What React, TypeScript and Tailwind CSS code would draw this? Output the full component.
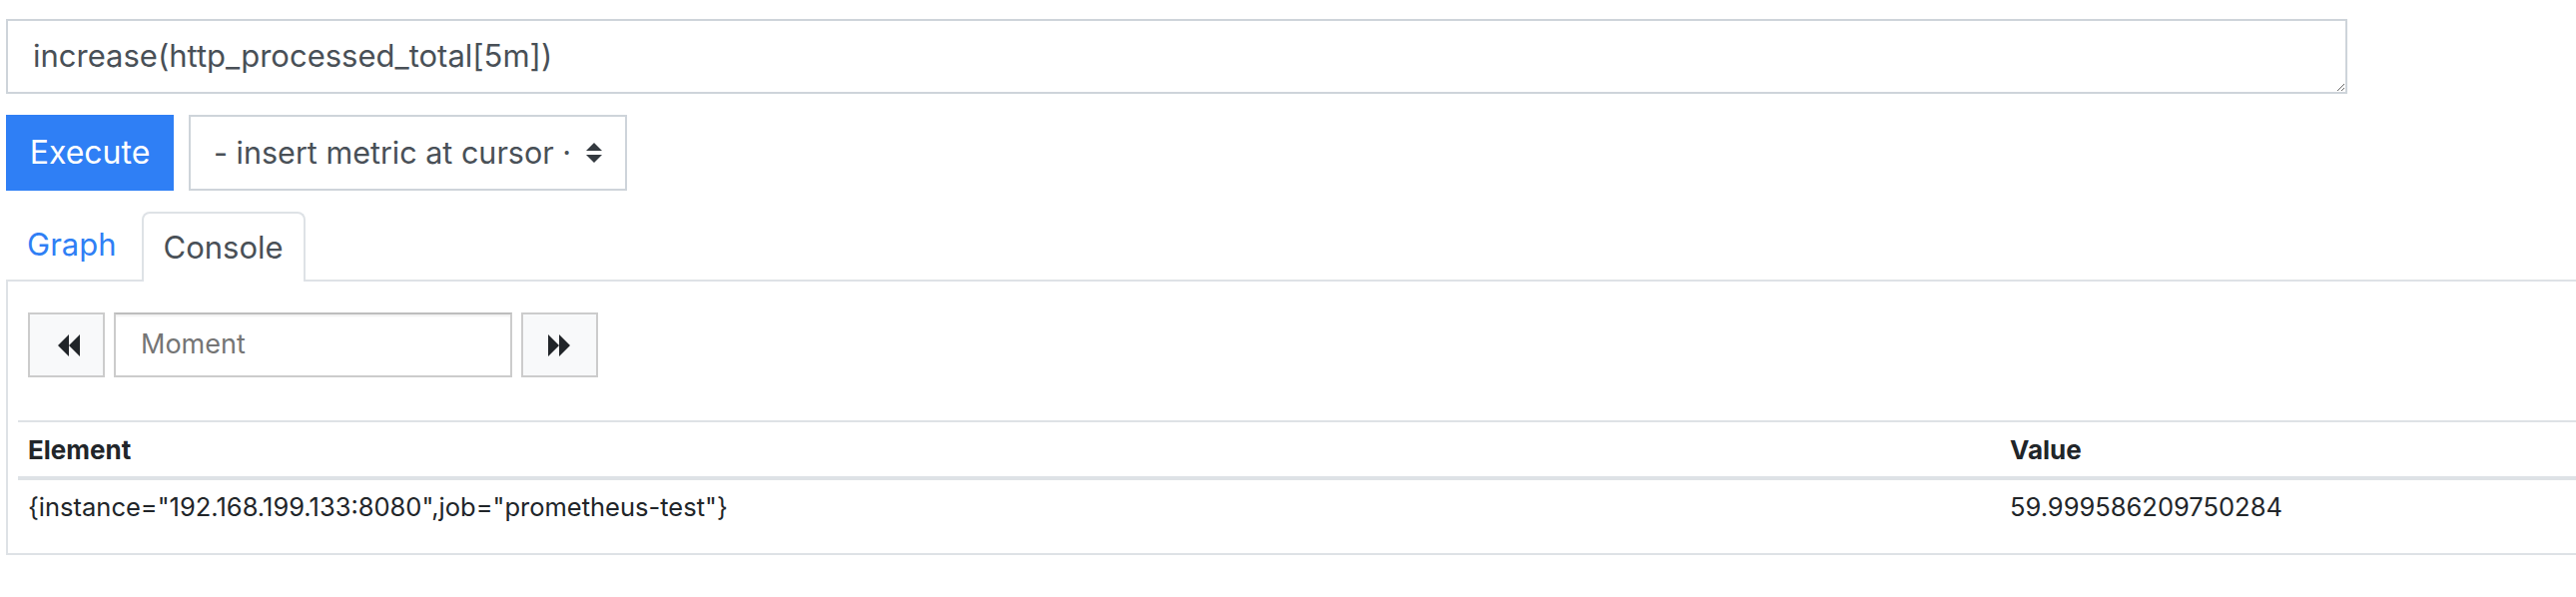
import React from "react";

const FONT = "font-['Inter','Liberation_Sans',sans-serif]";

function Backward() {
  return (
    <svg width="23" height="22" viewBox="0 0 23 22" aria-hidden="true">
      <path d="M23 0 L12 11 L23 22 Z M12 0 L1 11 L12 22 Z" fill="#212529" />
    </svg>
  );
}

function Forward() {
  return (
    <svg width="23" height="22" viewBox="0 0 23 22" aria-hidden="true">
      <path d="M0 0 L11 11 L0 22 Z M11 0 L22 11 L11 22 Z" fill="#212529" />
    </svg>
  );
}

function SelectArrows() {
  return (
    <svg width="16" height="20" viewBox="0 0 4 5" aria-hidden="true">
      <path d="M2 0L0 2h4zm0 5L0 3h4z" fill="#343a40" />
    </svg>
  );
}

export default function App() {
  return (
    <div className={`w-[2580px] h-[598px] bg-white overflow-hidden ${FONT}`}>
      <div className="w-[2700px] pl-[6px] pt-[19px] flex flex-col">
        <textarea
          readOnly
          rows={1}
          value="increase(http_processed_total[5m])"
          className="block w-[2345px] h-[75px] border-2 border-[#ced4da] bg-white pl-[25px] pr-[25px] pt-[11px] pb-[12px] text-[31px] leading-[48px] text-[#495057] outline-none resize-y"
        />

        <div className="mt-[21px] flex items-stretch gap-[15px] h-[76px]">
          <div className="w-[168px] bg-[#2f7ff5] text-white text-[32px] flex items-center justify-center">
            Execute
          </div>
          <div className="w-[439px] border-2 border-[#ced4da] bg-white flex items-center pl-[23px] pr-[23px]">
            <div className="w-[356px] whitespace-nowrap text-[30.5px] text-[#495057]">
              - insert metric at cursor ·
            </div>
            <div className="ml-[17px] flex items-center">
              <SelectArrows />
            </div>
          </div>
        </div>

        <div className="mt-[21px] flex items-end h-[70px] border-b-2 border-[#dee2e6]">
          <div className="h-[70px] border-2 border-transparent pl-[19px] pr-[23px] flex items-center text-[31px] text-[#2f7ff5]">
            Graph
          </div>
          <div className="h-[70px] -mb-[2px] border-2 border-b-0 border-[#dee2e6] rounded-t-[8px] bg-white px-[20px] flex items-center text-[31px] text-[#495057]">
            Console
          </div>
        </div>

        <div className="border-l-2 border-b-2 border-[#dee2e6] pl-[10px] pt-[31px] pb-[19px]">
          <div className="ml-[10px] flex items-stretch gap-[9px] h-[65px]">
            <div className="w-[77px] border-2 border-[#cccccc] bg-[#f8f9fa] flex items-center justify-center pl-[3px]">
              <Backward />
            </div>
            <div className="w-[399px] border-2 border-[#cccccc] border-t-[#bdbdbd] bg-white shadow-[inset_0_2px_2px_rgba(0,0,0,0.06)] flex items-center pl-[25px] text-[27px] text-[#757575]">
              Moment
            </div>
            <div className="w-[77px] border-2 border-[#cccccc] bg-[#f8f9fa] flex items-center justify-center">
              <Forward />
            </div>
          </div>

          <div className="mt-[43px] border-t-2 border-[#dee2e6]">
            <div className="flex h-[54px] items-center border-b-4 border-[#dee2e6] box-content">
              <div className="w-[1985px] pl-[10px] text-[26px] font-bold text-[#212529]">Element</div>
              <div className="pl-[10px] text-[26px] font-bold text-[#212529]">Value</div>
            </div>
            <div className="flex h-[54px] items-center">
              <div className="w-[1985px] pl-[10px] text-[25.5px] text-[#212529]">
                {'{instance="192.168.199.133:8080",job="prometheus-test"}'}
              </div>
              <div className="pl-[10px] text-[25.5px] text-[#212529]">59.999586209750284</div>
            </div>
          </div>
        </div>
      </div>
    </div>
  );
}
